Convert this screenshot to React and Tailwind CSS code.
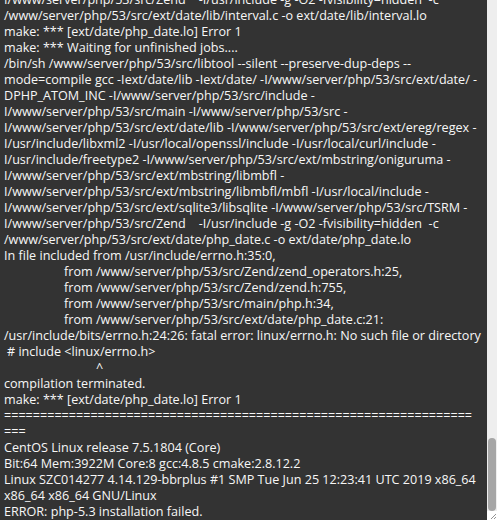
const lines = [
  { t: 'I/www/server/php/53/src/Zend    -I/usr/include -g -O2 -fvisibility=hidden  -c' },
  { t: '/www/server/php/53/src/ext/date/lib/interval.c -o ext/date/lib/interval.lo' },
  { t: 'make: *** [ext/date/php_date.lo] Error 1' },
  { t: 'make: *** Waiting for unfinished jobs....' },
  { t: '/bin/sh /www/server/php/53/src/libtool --silent --preserve-dup-deps --' },
  { t: 'mode=compile gcc -Iext/date/lib -Iext/date/ -I/www/server/php/53/src/ext/date/ -' },
  { t: 'DPHP_ATOM_INC -I/www/server/php/53/src/include -' },
  { t: 'I/www/server/php/53/src/main -I/www/server/php/53/src -' },
  { t: 'I/www/server/php/53/src/ext/date/lib -I/www/server/php/53/src/ext/ereg/regex -' },
  { t: 'I/usr/include/libxml2 -I/usr/local/openssl/include -I/usr/local/curl/include -' },
  { t: 'I/usr/include/freetype2 -I/www/server/php/53/src/ext/mbstring/oniguruma -' },
  { t: 'I/www/server/php/53/src/ext/mbstring/libmbfl -' },
  { t: 'I/www/server/php/53/src/ext/mbstring/libmbfl/mbfl -I/usr/local/include -' },
  { t: 'I/www/server/php/53/src/ext/sqlite3/libsqlite -I/www/server/php/53/src/TSRM -' },
  { t: 'I/www/server/php/53/src/Zend    -I/usr/include -g -O2 -fvisibility=hidden  -c' },
  { t: '/www/server/php/53/src/ext/date/php_date.c -o ext/date/php_date.lo' },
  { t: 'In file included from /usr/include/errno.h:35:0,' },
  { t: 'from /www/server/php/53/src/Zend/zend_operators.h:25,', from: true },
  { t: 'from /www/server/php/53/src/Zend/zend.h:755,', from: true },
  { t: 'from /www/server/php/53/src/main/php.h:34,', from: true },
  { t: 'from /www/server/php/53/src/ext/date/php_date.c:21:', from: true },
  { t: '/usr/include/bits/errno.h:24:26: fatal error: linux/errno.h: No such file or directory' },
  { t: '# include <linux/errno.h>', small: true },
  { t: '^', caret: true },
  { t: 'compilation terminated.' },
  { t: 'make: *** [ext/date/php_date.lo] Error 1' },
  { t: '='.repeat(65) },
  { t: '===' },
  { t: 'CentOS Linux release 7.5.1804 (Core)' },
  { t: 'Bit:64 Mem:3922M Core:8 gcc:4.8.5 cmake:2.8.12.2' },
  { t: 'Linux SZC014277 4.14.129-bbrplus #1 SMP Tue Jun 25 12:23:41 UTC 2019 x86_64' },
  { t: 'x86_64 x86_64 GNU/Linux' },
  { t: 'ERROR: php-5.3 installation failed.' },
];

export default function App() {
  return (
    <div className="w-[504px] h-[529px] bg-white">
      <div className="flex w-[497px] h-[520px]">
        {/* log output, scrolled to the end */}
        <div
          className="flex-1 bg-[#333333] overflow-hidden flex flex-col justify-end pl-[4px] text-[12.6px] leading-[16px] text-[#f7f7f7]"
          style={{ fontFamily: '"Open Sans", "Noto Sans CJK SC", sans-serif' }}
        >
          {lines.map((l, i) => (
            <div
              key={i}
              className={`whitespace-pre shrink-0 h-[16px] ${
                l.from ? 'pl-[60px]' : l.small ? 'pl-[3px]' : l.caret ? 'pl-[92px]' : ''
              }`}
            >
              {l.t}
            </div>
          ))}
        </div>

        {/* scrollbar */}
        <div className="w-[10px] bg-[#eeeeee] flex flex-col justify-end">
          <div className="mx-[1px] h-[73px] rounded-full bg-[#a6a6a6]" />
          <div className="h-[9px] bg-white flex items-end justify-end pr-[1px] pb-[1px]">
            <svg width="6" height="6" viewBox="0 0 6 6">
              <path d="M1 6 L6 1 M4 6 L6 4" stroke="#777" strokeWidth="0.8" />
            </svg>
          </div>
        </div>
      </div>
    </div>
  );
}
